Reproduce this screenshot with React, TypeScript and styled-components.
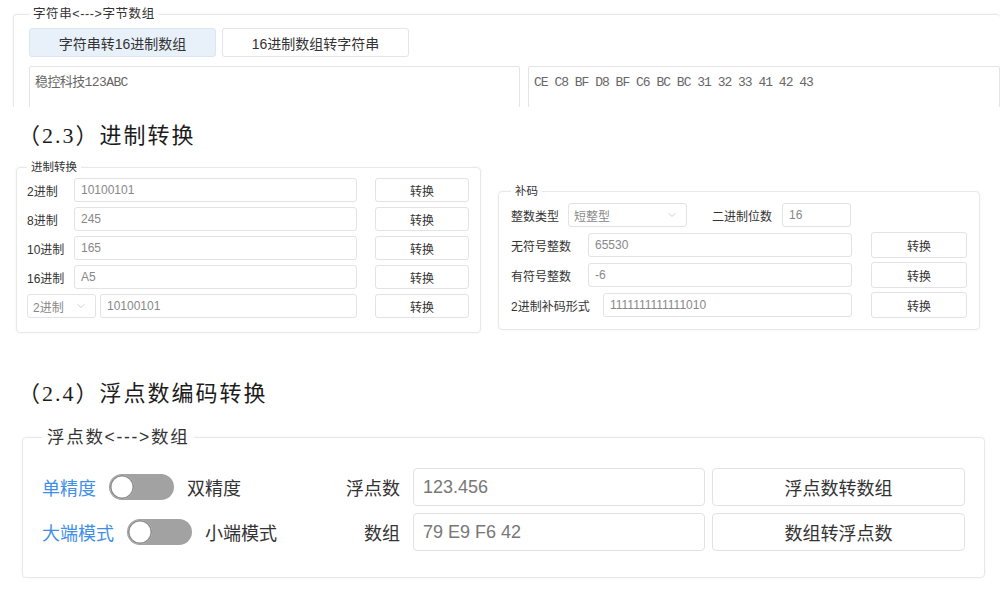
import React from "react";
import styled, { createGlobalStyle } from "styled-components";
import { ChevronDown } from "lucide-react";

const SANS = `"Liberation Sans", "Noto Sans CJK SC", sans-serif`;

const Global = createGlobalStyle`
  html, body { margin: 0; padding: 0; background: #fff; }
  body { width: 1000px; height: 590px; overflow: hidden; font-family: ${SANS}; color: #333; }
  * { box-sizing: border-box; }
`;

const Page = styled.div`
  display: flex;
  flex-direction: column;
  width: 1000px;
`;

/* ---------- section 1 : string <-> bytes ---------- */
const Clip = styled.section`
  height: 107px;
  overflow: hidden;
  padding: 7px 0 0 13px;
`;

const Card = styled.fieldset`
  margin: 0;
  min-width: 0;
  border: 1px solid #e8e8e8;
  border-radius: 4px;
  box-shadow: 0 0 3px rgba(0, 0, 0, 0.05);
  background: #fff;
`;

const StrCard = styled(Card)`
  padding: 0 0 0 15px;
  border-right: none;
  border-bottom: none;
`;

const Legend = styled.legend<{ $size: number; $lh: number; $pad: number; $ls?: number }>`
  padding: 0 ${(p) => p.$pad}px;
  font-size: ${(p) => p.$size}px;
  line-height: ${(p) => p.$lh}px;
  letter-spacing: ${(p) => p.$ls ?? 0}px;
  color: #333;
`;

const TabRow = styled.div`
  display: flex;
  gap: 6px;
  margin-top: 6px;
`;

const Tab = styled.button<{ $active?: boolean }>`
  width: 187px;
  height: 29px;
  border: 1px solid ${(p) => (p.$active ? "#dce6f2" : "#e3e5e8")};
  background: ${(p) => (p.$active ? "#e8f0fa" : "#fff")};
  border-radius: 3px;
  font: 14px ${SANS};
  color: #333;
  padding: 0;
`;

const TextPair = styled.div`
  display: grid;
  grid-template-columns: 491px 1fr;
  gap: 8px;
  margin-top: 9px;
`;

const TextBox = styled.div<{ $ls: number }>`
  height: 70px;
  border: 1px solid #e4e4e4;
  border-radius: 2px;
  padding: 7px 5px;
  font: 13px/18px "Liberation Mono", "Noto Sans CJK SC", monospace;
  letter-spacing: ${(p) => p.$ls}px;
  color: #666;
`;

/* ---------- headings ---------- */
const SectionTitle = styled.h2<{ $top: number }>`
  margin: ${(p) => p.$top}px 0 0 18px;
  font: 400 22px/30px "Liberation Serif", "Noto Sans CJK SC", serif;
  letter-spacing: 2px;
  color: #1c1c1c;
`;

/* ---------- section 2 : radix ---------- */
const CardsRow = styled.div`
  display: flex;
  align-items: flex-start;
  gap: 17px;
  margin-top: 9px;
  padding-left: 16px;
`;

const RadixCard = styled(Card)`
  width: 465px;
  padding: 0 11px 14px 10px;
`;

const ComplementCard = styled(Card)`
  width: 482px;
  margin-top: 24px;
  padding: 0 12px 12px 12px;
`;

const Rows = styled.div<{ $gap: number; $top: number }>`
  display: flex;
  flex-direction: column;
  gap: ${(p) => p.$gap}px;
  margin-top: ${(p) => p.$top}px;
`;

const Row = styled.div`
  display: flex;
  align-items: center;
  height: 24px;
`;

const Label = styled.span<{ $w: number; $ml?: number }>`
  flex: none;
  width: ${(p) => p.$w}px;
  margin-left: ${(p) => p.$ml ?? 0}px;
  font-size: 12px;
  color: #333;
  white-space: nowrap;
`;

const Field = styled.input<{ $w?: number }>`
  flex: ${(p) => (p.$w ? "none" : "1 1 0")};
  width: ${(p) => (p.$w ? `${p.$w}px` : "auto")};
  min-width: 0;
  height: 24px;
  border: 1px solid #e3e3e3;
  border-radius: 3px;
  padding: 0 6px;
  font: 12px ${SANS};
  color: #888;
  background: #fff;
  outline: none;
`;

const SmallButton = styled.button<{ $w: number; $h: number; $ml: number }>`
  flex: none;
  width: ${(p) => p.$w}px;
  height: ${(p) => p.$h}px;
  margin-left: ${(p) => p.$ml}px;
  border: 1px solid #e3e3e3;
  border-radius: 3px;
  background: #fff;
  font: 12px ${SANS};
  color: #333;
  padding: 0;
`;

const Select = styled.div<{ $w: number; $mr?: number }>`
  flex: none;
  width: ${(p) => p.$w}px;
  margin-right: ${(p) => p.$mr ?? 0}px;
  height: 24px;
  border: 1px solid #e3e3e3;
  border-radius: 3px;
  padding: 0 8px 0 5px;
  display: flex;
  align-items: center;
  justify-content: space-between;
  font-size: 12px;
  color: #888;
`;

/* ---------- section 3 : float ---------- */
const FloatCard = styled(Card)`
  width: 963px;
  margin: 18px 0 0 22px;
  padding: 0 19px 26px 19px;
`;

const FloatRows = styled.div`
  display: flex;
  flex-direction: column;
  gap: 7px;
  margin-top: 21px;
`;

const FloatRow = styled.div`
  display: flex;
  align-items: center;
  height: 38px;
`;

const SwitchGroup = styled.div`
  flex: 1;
  display: flex;
  align-items: center;
  gap: 13px;
  font-size: 18px;
`;

const SwitchText = styled.span<{ $on?: boolean }>`
  color: ${(p) => (p.$on ? "#3f8fe8" : "#333")};
`;

const Switch = styled.span`
  position: relative;
  flex: none;
  width: 65px;
  height: 26px;
  border-radius: 13px;
  background: #a2a2a2;
  &::after {
    content: "";
    position: absolute;
    left: 1px;
    top: 1px;
    width: 24px;
    height: 24px;
    border-radius: 50%;
    background: #fff;
    box-shadow: inset 0 0 0 1.5px #8f8f8f;
  }
`;

const FieldLabel = styled.span`
  margin-right: 13px;
  font-size: 18px;
  color: #333;
`;

const BigField = styled.input`
  width: 292px;
  height: 38px;
  border: 1px solid #e2e2e2;
  border-radius: 4px;
  padding: 0 9px;
  font: 18px ${SANS};
  color: #777;
  background: #fff;
  outline: none;
`;

const BigButton = styled.button`
  width: 253px;
  height: 38px;
  margin-left: 7px;
  border: 1px solid #e2e2e2;
  border-radius: 4px;
  background: #fff;
  font: 18px ${SANS};
  color: #333;
  padding: 0;
`;

const Chevron = () => <ChevronDown size={12} strokeWidth={1.4} color="#bbb" />;

const radixRows = [
  { label: "2进制", value: "10100101" },
  { label: "8进制", value: "245" },
  { label: "10进制", value: "165" },
  { label: "16进制", value: "A5" },
];

const complementRows = [
  { label: "无符号整数", w: 77, value: "65530" },
  { label: "有符号整数", w: 77, value: "-6" },
  { label: "2进制补码形式", w: 92, value: "1111111111111010" },
];

export default function App() {
  return (
    <Page>
      <Global />
      <Clip>
        <StrCard>
          <Legend $size={12.5} $lh={15} $pad={4} $ls={0.6}>字符串&lt;---&gt;字节数组</Legend>
          <TabRow>
            <Tab $active>字符串转16进制数组</Tab>
            <Tab>16进制数组转字符串</Tab>
          </TabRow>
          <TextPair>
            <TextBox $ls={-0.6}>稳控科技123ABC</TextBox>
            <TextBox $ls={-1}>CE C8 BF D8 BF C6 BC BC 31 32 33 41 42 43</TextBox>
          </TextPair>
        </StrCard>
      </Clip>

      <SectionTitle $top={14}>（2.3）进制转换</SectionTitle>
      <CardsRow>
        <RadixCard>
          <Legend $size={11.5} $lh={14} $pad={4}>进制转换</Legend>
          <Rows $gap={5} $top={4}>
            {radixRows.map((r) => (
              <Row key={r.label}>
                <Label $w={47}>{r.label}</Label>
                <Field readOnly defaultValue={r.value} />
                <SmallButton $w={94} $h={24} $ml={18}>转换</SmallButton>
              </Row>
            ))}
            <Row>
              <Select $w={69} $mr={4}>
                <span>2进制</span>
                <Chevron />
              </Select>
              <Field readOnly defaultValue="10100101" />
              <SmallButton $w={94} $h={24} $ml={18}>转换</SmallButton>
            </Row>
          </Rows>
        </RadixCard>

        <ComplementCard>
          <Legend $size={11.5} $lh={14} $pad={4}>补码</Legend>
          <Rows $gap={6} $top={5}>
            <Row>
              <Label $w={57}>整数类型</Label>
              <Select $w={119}>
                <span>短整型</span>
                <Chevron />
              </Select>
              <Label $w={70} $ml={25}>二进制位数</Label>
              <Field $w={69} readOnly defaultValue="16" />
            </Row>
            {complementRows.map((r) => (
              <Row key={r.label}>
                <Label $w={r.w}>{r.label}</Label>
                <Field readOnly defaultValue={r.value} />
                <SmallButton $w={96} $h={26} $ml={19}>转换</SmallButton>
              </Row>
            ))}
          </Rows>
        </ComplementCard>
      </CardsRow>

      <SectionTitle $top={46}>（2.4）浮点数编码转换</SectionTitle>
      <FloatCard>
        <Legend $size={17.5} $lh={20} $pad={5} $ls={1.7}>浮点数&lt;---&gt;数组</Legend>
        <FloatRows>
          <FloatRow>
            <SwitchGroup>
              <SwitchText $on>单精度</SwitchText>
              <Switch />
              <SwitchText>双精度</SwitchText>
            </SwitchGroup>
            <FieldLabel>浮点数</FieldLabel>
            <BigField readOnly defaultValue="123.456" />
            <BigButton>浮点数转数组</BigButton>
          </FloatRow>
          <FloatRow>
            <SwitchGroup>
              <SwitchText $on>大端模式</SwitchText>
              <Switch />
              <SwitchText>小端模式</SwitchText>
            </SwitchGroup>
            <FieldLabel>数组</FieldLabel>
            <BigField readOnly defaultValue="79 E9 F6 42" />
            <BigButton>数组转浮点数</BigButton>
          </FloatRow>
        </FloatRows>
      </FloatCard>
    </Page>
  );
}
